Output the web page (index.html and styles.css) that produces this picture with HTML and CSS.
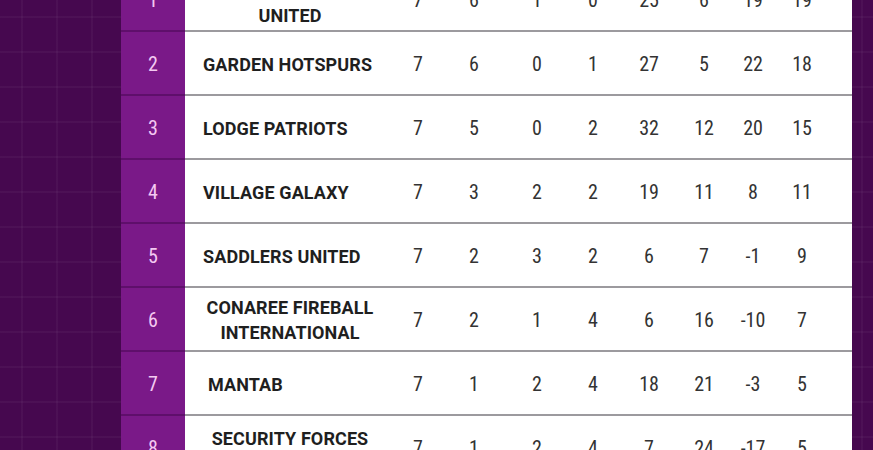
FILE: index.html
```html
<!DOCTYPE html>
<html>
<head>
<meta charset="utf-8">
<link rel="stylesheet" href="styles.css">
</head>
<body>
<div class="page">
  <div class="table">
    <div class="row first">
      <div class="rank">1</div>
      <div class="team multi low">ROYAL<br>UNITED</div>
      <div class="n">7</div><div class="n">6</div><div class="n">1</div><div class="n">0</div><div class="n">25</div><div class="n">6</div><div class="n">19</div><div class="n">19</div>
    </div>
    <div class="row">
      <div class="rank">2</div>
      <div class="team">GARDEN HOTSPURS</div>
      <div class="n">7</div><div class="n">6</div><div class="n">0</div><div class="n">1</div><div class="n">27</div><div class="n">5</div><div class="n">22</div><div class="n">18</div>
    </div>
    <div class="row">
      <div class="rank">3</div>
      <div class="team">LODGE PATRIOTS</div>
      <div class="n">7</div><div class="n">5</div><div class="n">0</div><div class="n">2</div><div class="n">32</div><div class="n">12</div><div class="n">20</div><div class="n">15</div>
    </div>
    <div class="row">
      <div class="rank">4</div>
      <div class="team">VILLAGE GALAXY</div>
      <div class="n">7</div><div class="n">3</div><div class="n">2</div><div class="n">2</div><div class="n">19</div><div class="n">11</div><div class="n">8</div><div class="n">11</div>
    </div>
    <div class="row">
      <div class="rank">5</div>
      <div class="team">SADDLERS UNITED</div>
      <div class="n">7</div><div class="n">2</div><div class="n">3</div><div class="n">2</div><div class="n">6</div><div class="n">7</div><div class="n">-1</div><div class="n">9</div>
    </div>
    <div class="row">
      <div class="rank">6</div>
      <div class="team multi">CONAREE FIREBALL<br>INTERNATIONAL</div>
      <div class="n">7</div><div class="n">2</div><div class="n">1</div><div class="n">4</div><div class="n">6</div><div class="n">16</div><div class="n">-10</div><div class="n">7</div>
    </div>
    <div class="row">
      <div class="rank">7</div>
      <div class="team indent">MANTAB</div>
      <div class="n">7</div><div class="n">1</div><div class="n">2</div><div class="n">4</div><div class="n">18</div><div class="n">21</div><div class="n">-3</div><div class="n">5</div>
    </div>
    <div class="row">
      <div class="rank">8</div>
      <div class="team multi low">SECURITY FORCES<br>UNITED</div>
      <div class="n">7</div><div class="n">1</div><div class="n">2</div><div class="n">4</div><div class="n">7</div><div class="n">24</div><div class="n">-17</div><div class="n">5</div>
    </div>
  </div>
</div>
</body>
</html>
```

FILE: styles.css
```css
html, body {
  margin: 0;
  padding: 0;
}
body {
  width: 873px;
  height: 450px;
  overflow: hidden;
  background-color: #46084f;
  background-image:
    repeating-linear-gradient(90deg, transparent 0 21px, rgba(255,255,255,0.035) 21px 23px, transparent 23px 35px),
    repeating-linear-gradient(180deg, transparent 0 16px, rgba(255,255,255,0.035) 16px 18px, transparent 18px 35px);
}
.page {
  padding-left: 121px;
  width: 731px;
}
.table {
  margin-top: -32px;
}
.row {
  display: grid;
  grid-template-columns: 64px 210px 46px 66px 60px 52px 60px 50px 48px 50px 1fr;
  height: 64px;
  align-items: center;
  background: #ffffff;
  box-shadow: inset 0 -2px 0 #9c9a9e;
  font-family: "Roboto", "Liberation Sans", sans-serif;
}
.rank {
  height: 100%;
  display: flex;
  align-items: center;
  justify-content: center;
  background: #7a1988;
  box-shadow: inset 0 -2px 0 #5f0f6b;
  color: #f4c9f2;
  font-size: 20px;
}
.rank, .n {
  font-stretch: 80%;
}
.team {
  padding: 0 18px;
  font-weight: 700;
  font-size: 18px;
  letter-spacing: 0.1px;
  color: #1f1f1f;
  line-height: 25px;
}
.team.multi {
  text-align: center;
}
.team.low {
  padding-top: 6px;
}
.team.indent {
  padding-left: 23px;
}
.n {
  text-align: center;
  font-size: 20px;
  color: #333333;
}
```
